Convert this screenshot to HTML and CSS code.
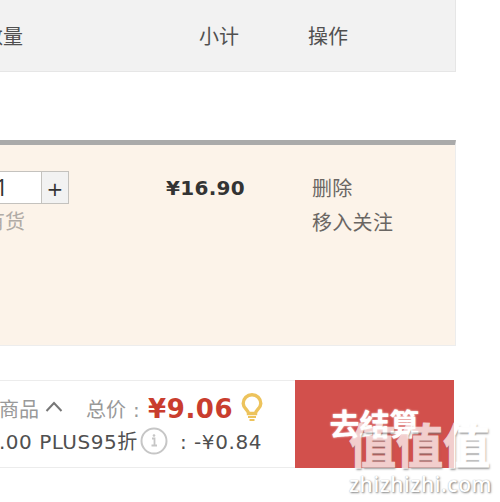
FILE: index.html
```html
<!DOCTYPE html>
<html lang="zh-CN">
<head>
    <meta charset="UTF-8">
    <meta name="viewport" content="width=device-width, initial-scale=1.0">
    <title>购物车</title>
    <link rel="stylesheet" href="styles.css">
</head>
<body>
    <div class="cart">
        <div class="cart-head">
            <span class="col-quantity">数量</span>
            <span class="col-sum">小计</span>
            <span class="col-action">操作</span>
        </div>

        <div class="cart-item">
            <div class="quantity">
                <div class="stepper">
                    <span class="amount">1</span>
                    <span class="plus">+</span>
                </div>
                <div class="stock">有货</div>
            </div>
            <div class="item-sum">¥16.90</div>
            <div class="item-actions">
                <div>删除</div>
                <div>移入关注</div>
            </div>
        </div>

        <div class="toolbar">
            <div class="summary">
                <div class="total">
                    <span class="goods">商品</span>
                    <svg class="arrow" width="18" height="12" viewBox="0 0 18 12">
                        <path d="M1.5 10 L9 2 L16.5 10" fill="none" stroke="#777" stroke-width="2"/>
                    </svg>
                    <span class="total-label">总价<span class="colon">:</span></span>
                    <b class="total-price">¥9.06</b>
                    <svg class="bulb" width="22" height="30" viewBox="0 0 22 30">
                        <path d="M7.5 20.5 C7.5 17 2.2 15.5 2.2 10.5 A8.8 8.8 0 0 1 19.8 10.5 C19.8 15.5 14.5 17 14.5 20.5 Z" fill="none" stroke="#edc35c" stroke-width="3.4"/>
                        <path d="M7 24 H15 M8.5 27 H13.5" stroke="#edc35c" stroke-width="2.2"/>
                    </svg>
                </div>
                <div class="discount">
                    <span class="discount-name">.00 PLUS95折</span>
                    <svg class="info" width="28" height="28" viewBox="0 0 28 28">
                        <circle cx="14" cy="14" r="12.5" fill="#fff" stroke="#c6c6c6" stroke-width="2"/>
                        <path d="M12 11.5 H14.5 V18 M11.5 18.5 H17" fill="none" stroke="#c6c6c6" stroke-width="1.8"/>
                        <circle cx="14" cy="8.5" r="1.3" fill="#c6c6c6"/>
                    </svg>
                    <span class="discount-colon">:</span>
                    <span class="discount-value">-¥0.84</span>
                </div>
            </div>
            <div class="submit">去结算</div>
        </div>
    </div>

    <div class="watermark">
        <div class="watermark-name">值值值</div>
        <div class="watermark-site">zhizhizhi.com</div>
    </div>
</body>
</html>
```

FILE: styles.css
```css
body {
    margin: 0;
    position: relative;
    height: 502px;
    overflow: hidden;
    background-color: #fff;
    color: #505050;
    font-family: "DejaVu Sans", "Noto Sans CJK SC", sans-serif;
    font-size: 20px;
}
.cart {
    width: 456px;
}
.cart-head,
.cart-item,
.toolbar,
.total,
.discount,
.stepper {
    display: flex;
    box-sizing: border-box;
    white-space: nowrap;
}
.cart-head {
    height: 72px;
    align-items: center;
    background-color: #f2f2f2;
    border-right: 1px solid #e6e6e6;
    border-bottom: 1px solid #e6e6e6;
}
.col-quantity {
    width: 216px;
    margin-left: -17px;
}
.col-sum {
    width: 109px;
}
.cart-item {
    height: 206px;
    margin-top: 68px;
    background-color: #fcf3e9;
    border-top: 5px solid #aaa;
    border-right: 1px solid #ededed;
    border-bottom: 1px solid #ededed;
}
.quantity {
    width: 166px;
    padding-top: 26px;
}
.stepper {
    width: 69px;
    height: 33px;
    border: 1px solid #c4c2be;
    border-left: 0;
    background-color: #fff;
    line-height: 33px;
}
.amount {
    width: 46px;
    margin-left: -5px;
    color: #333;
    font-family: "Open Sans", sans-serif;
    font-size: 23px;
    line-height: 31px;
}
.plus {
    flex: 1;
    border-left: 1px solid #c4c2be;
    background-color: #f2f2f2;
    color: #333;
    text-align: center;
    line-height: 35px;
}
.stock {
    margin-left: -15px;
    color: #b0aba6;
    line-height: 37px;
}
.item-sum {
    width: 146px;
    padding-top: 27px;
    color: #333;
    font-weight: bold;
    letter-spacing: 0.3px;
    line-height: 33px;
}
.item-actions {
    padding-top: 27px;
    color: #6a6663;
    letter-spacing: 0.3px;
    line-height: 34px;
}
.toolbar {
    width: 454px;
    height: 88px;
    margin-top: 34px;
}
.summary {
    width: 295px;
    height: 88px;
    box-sizing: border-box;
    border-top: 1px solid #ececec;
    border-bottom: 1px solid #ececec;
}
.total {
    height: 42px;
    padding-top: 13px;
    color: #999;
    line-height: 32px;
}
.goods {
    width: 46px;
    margin-left: -1px;
}
.arrow {
    margin-top: 7px;
}
.total-label {
    width: 62px;
    margin-left: 23px;
}
.colon {
    margin-left: 7px;
}
.total-price {
    width: 93px;
    color: #c93d2e;
    font-size: 26px;
    letter-spacing: 0.6px;
    line-height: 30px;
}
.bulb {
    flex: none;
    margin-top: -1px;
}
.discount {
    height: 36px;
    line-height: 38px;
}
.discount-name {
    width: 134px;
    margin-left: -1px;
    letter-spacing: 0.5px;
}
.info {
    margin: 4px 0 0 7px;
}
.discount-colon {
    width: 14px;
    margin-left: 12px;
}
.discount-value {
    letter-spacing: 0.6px;
}
.submit {
    width: 159px;
    height: 88px;
    background-color: #d2504c;
    color: #fff;
    font-family: "Noto Sans CJK SC", sans-serif;
    font-size: 30px;
    font-weight: bold;
    line-height: 84px;
    text-align: center;
    text-shadow: 0 0 2px #fff;
}
/* site mark lies over the corner of the page */
.watermark {
    position: absolute;
    top: 415px;
    left: 349px;
    color: #fff;
    white-space: nowrap;
    opacity: 0.72;
}
.watermark-name {
    height: 58px;
    font-family: "Noto Sans CJK SC", sans-serif;
    font-size: 47px;
    font-weight: bold;
    line-height: 56px;
    text-shadow: 1px 2px 2px #777;
    -webkit-text-stroke: 1px #fff;
}
.watermark-site {
    font-family: "Noto Sans", sans-serif;
    font-size: 21px;
    font-weight: 500;
    letter-spacing: 0.6px;
    line-height: 23px;
    text-shadow: 1px 1px 2px #555, 0 0 1px #999;
}
```
